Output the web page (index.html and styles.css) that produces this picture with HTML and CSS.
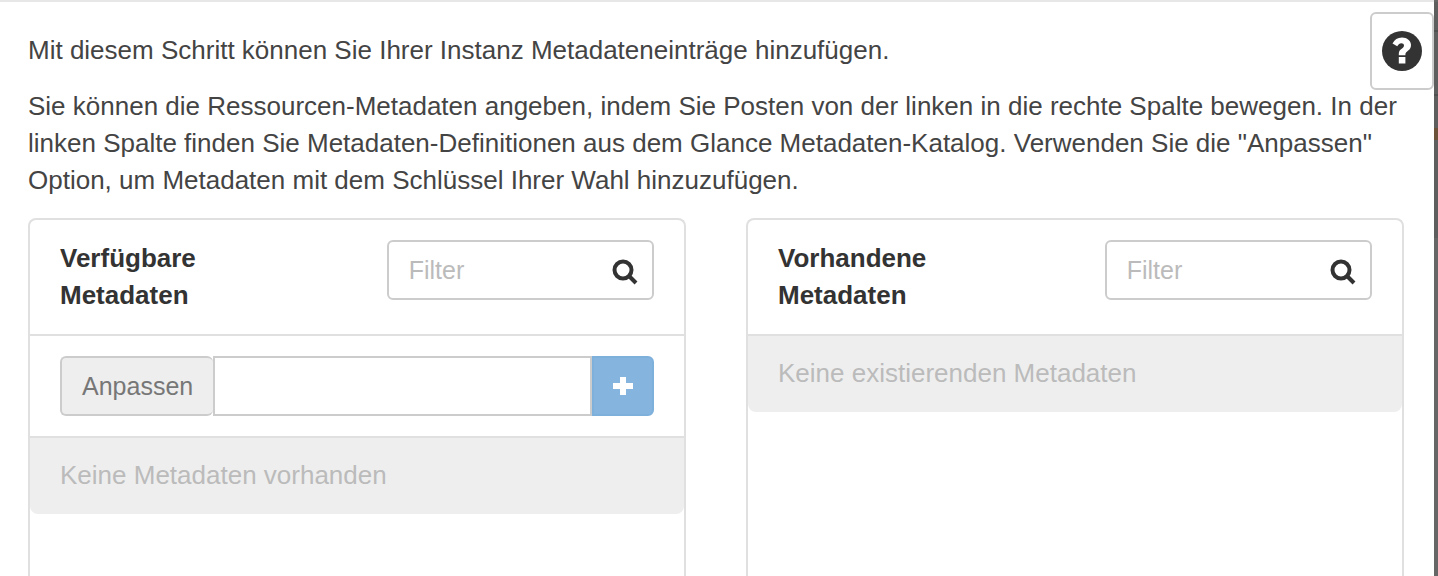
FILE: index.html
```html
<!DOCTYPE html>
<html lang="de">
<head>
<meta charset="utf-8">
<title>Metadaten</title>
<link rel="stylesheet" href="styles.css">
</head>
<body>
<main class="step">
  <button class="help" type="button" aria-label="Hilfe">
    <svg class="help-icon" viewBox="0 0 40 40" aria-hidden="true">
      <circle cx="20" cy="20" r="20" fill="#333"/>
      <path d="M10.500 12.500C12.500 8.500 15.500 6.500 20 6.500c5 0 9 3.300 9 7.500 0 5.800-5.600 6-5.600 9.500v.8h-6.600v-1.500c0-5 5.200-5.200 5.200-8.300 0-1.500-1.200-2.300-2.700-2.300-1.700 0-2.700.9-4.100 3.100z" fill="#fff"/>
      <path d="M16.800 26h6.600v6.500h-6.600z" fill="#fff"/>
    </svg>
  </button>
  <p class="text">Mit diesem Schritt können Sie Ihrer Instanz Metadateneinträge hinzufügen.</p>
  <p class="text">Sie können die Ressourcen-Metadaten angeben, indem Sie Posten von der linken in die rechte Spalte bewegen. In der linken Spalte finden Sie Metadaten-Definitionen aus dem Glance Metadaten-Katalog. Verwenden Sie die "Anpassen" Option, um Metadaten mit dem Schlüssel Ihrer Wahl hinzuzufügen.</p>
  <div class="columns">
    <section class="panel">
      <div class="panel-head">
        <label class="title" for="filter-available">Verfügbare Metadaten</label>
        <div class="filter">
          <input class="filter-input" id="filter-available" type="text" placeholder="Filter">
          <svg class="search-icon" viewBox="0 0 26 26" aria-hidden="true"><circle cx="11" cy="11" r="8.500"/><path d="M17 17l7 7"/></svg>
        </div>
      </div>
      <div class="custom">
        <label class="addon" for="custom-key">Anpassen</label>
        <input class="custom-input" id="custom-key" type="text">
        <button class="add" type="button" aria-label="Hinzufügen">
          <svg class="plus-icon" viewBox="0 0 20 20" aria-hidden="true"><path d="M7 1h6v6h7v6h-7v6H7v-6H0V7h7z"/></svg>
        </button>
      </div>
      <div class="empty">Keine Metadaten vorhanden</div>
    </section>
    <section class="panel">
      <div class="panel-head">
        <label class="title" for="filter-existing">Vorhandene Metadaten</label>
        <div class="filter">
          <input class="filter-input" id="filter-existing" type="text" placeholder="Filter">
          <svg class="search-icon" viewBox="0 0 26 26" aria-hidden="true"><circle cx="11" cy="11" r="8.500"/><path d="M17 17l7 7"/></svg>
        </div>
      </div>
      <div class="empty">Keine existierenden Metadaten</div>
    </section>
  </div>
</main>
</body>
</html>
```
FILE: styles.css
```css
* { box-sizing: border-box; }

body {
  margin: 0;
  background: #666;
  color: #444;
  font: 26px/37px "Liberation Sans", Arial, sans-serif;
}

.step {
  position: relative;
  display: flex;
  flex-direction: column;
  min-height: 100vh;
  margin-right: 4px;
  padding: 30px 30px 0 28px;
  border-top: 2px solid #e7e7e7;
  background: #fff;
}

/* slice of the dimmed page visible beside the dialog */
.step::after {
  content: "";
  position: absolute;
  top: 0;
  left: 100%;
  width: 4px;
  height: 236px;
  background: linear-gradient(#5e5e5e 28px, #505050 28px 30px, #5e5e5e 30px 92px, #505050 92px 94px, #5e5e5e 94px 126px, #6b5238 126px 138px, #5e5e5e 138px);
}

.text { margin: 0 0 19px; }

.help {
  position: absolute;
  top: 10px;
  right: 0;
  display: flex;
  align-items: center;
  justify-content: center;
  width: 64px;
  height: 78px;
  padding: 0;
  border: 2px solid #ccc;
  border-radius: 6px;
  background: #fff;
}

.help-icon { width: 40px; height: 40px; }

.columns {
  display: grid;
  flex: 1;
  grid-template-columns: repeat(2, minmax(0, 1fr));
  gap: 60px;
}

.panel {
  border: 2px solid #e0e0e0;
  border-bottom: 0;
  border-radius: 8px 8px 0 0;
}

.panel-head {
  display: flex;
  gap: 60px;
  padding: 20px 30px;
  border-bottom: 2px solid #e0e0e0;
}

.title {
  flex: 1;
  color: #333;
  font-weight: bold;
}

.filter {
  position: relative;
  width: 45%;
}

input {
  min-width: 0;
  height: 60px;
  border: 2px solid #ccc;
  background: #fff;
  color: #444;
  font: inherit;
  font-size: 25px;
}

.filter-input {
  width: 100%;
  padding: 0 56px 0 20px;
  border-radius: 6px;
}

.filter-input::placeholder { color: #bbb; opacity: 1; }

.search-icon {
  position: absolute;
  top: 19px;
  right: 16px;
  width: 26px;
  height: 26px;
  fill: none;
  stroke: #333;
  stroke-width: 4;
}

.custom {
  display: flex;
  padding: 20px 30px;
  border-bottom: 2px solid #e0e0e0;
}

.addon {
  display: flex;
  align-items: center;
  height: 60px;
  padding: 0 20px;
  border: 2px solid #ccc;
  border-right: 0;
  border-radius: 6px;
  background: #eee;
  color: #777;
  font-size: 25px;
}

.custom-input { flex: 1; padding: 0 20px; }

.add {
  display: flex;
  align-items: center;
  justify-content: center;
  width: 62px;
  height: 60px;
  padding: 0;
  border: 2px solid #7eb0dc;
  border-radius: 0 6px 6px 0;
  background: #85b4df;
}

.plus-icon { width: 20px; height: 20px; fill: #fff; }

.empty {
  padding: 19px 30px 20px;
  border-radius: 0 0 8px 8px;
  background: #eee;
  color: #bbb;
}
```
